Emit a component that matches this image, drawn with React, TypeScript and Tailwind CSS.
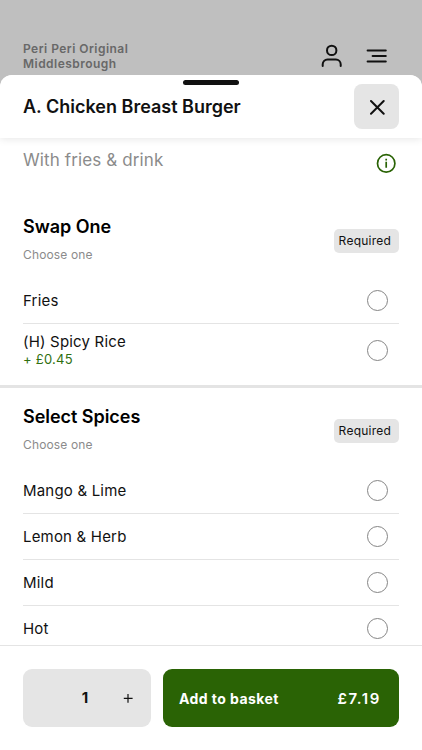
type Option = { name: string; price?: string };

const sections: { title: string; options: Option[] }[] = [
  {
    title: "Swap One",
    options: [{ name: "Fries" }, { name: "(H) Spicy Rice", price: "+ £0.45" }],
  },
  {
    title: "Select Spices",
    options: [
      { name: "Mango & Lime" },
      { name: "Lemon & Herb" },
      { name: "Mild" },
      { name: "Hot" },
    ],
  },
];

function OptionRow({ option, last }: { option: Option; last: boolean }) {
  return (
    <li
      className={`flex items-center justify-between pr-[11px] ${
        option.price ? "h-[53px]" : last ? "h-[45px]" : "h-[46px]"
      } ${last ? "" : "border-b border-[#e4e4e4]"}`}
    >
      <div>
        <p className="text-[15px] leading-[18px] tracking-[0.19px]">{option.name}</p>
        {option.price && (
          <p className="text-[13px] leading-[17px] tracking-[0.25px] text-[#2f6f10]">
            {option.price}
          </p>
        )}
      </div>
      <span className="size-[21px] rounded-full border border-[#858585]" />
    </li>
  );
}

export default function App() {
  return (
    <div className="flex h-[750px] w-[422px] flex-col overflow-hidden bg-[#bfbfbf] font-['Inter',sans-serif] text-[#111]">
      {/* ================= PAGE HEADER ================= */}
      <header className="flex h-[75px] shrink-0 justify-between pt-[41px] pr-[34px] pl-[23px]">
        <p className="text-[12px] leading-[15px] font-semibold tracking-[0.47px] text-[#686868]">
          Peri Peri Original
          <br />
          Middlesbrough
        </p>
        <div className="flex gap-[24px] pt-[3px]">
          <svg width="22" height="24" viewBox="0 0 22 24" fill="none" stroke="#111" strokeWidth="2" strokeLinecap="round">
            <circle cx="11.7" cy="6.4" r="4.7" />
            <path d="M2.7 22v-1.7a4.8 4.8 0 0 1 4.8-4.8h8.4a4.8 4.8 0 0 1 4.8 4.8v1.7" />
          </svg>
          <svg width="22" height="24" viewBox="0 0 22 24" fill="none" stroke="#111" strokeWidth="2" strokeLinecap="round">
            <path d="M1.6 6.5h18.2M6.6 12h13.2M1.6 17.6h18.2" />
          </svg>
        </div>
      </header>

      {/* ================= SHEET ================= */}
      <main className="flex min-h-0 flex-1 flex-col overflow-hidden rounded-t-[12px] bg-white">
        <div className="relative z-10 flex h-[63px] shrink-0 items-center justify-between bg-white pr-[23px] pl-[23px] shadow-[0_1px_8px_rgba(0,0,0,0.1)]">
          <span className="absolute top-[5px] left-[183px] h-[5px] w-[56px] rounded-full bg-[#111]" />
          <h1 className="text-[18px] font-semibold">A. Chicken Breast Burger</h1>
          <button
            aria-label="Close"
            className="flex size-[45px] items-center justify-center rounded-[8px] bg-[#e5e5e5]"
          >
            <svg width="16" height="16" viewBox="0 0 16 16" fill="none" stroke="#111" strokeWidth="2" strokeLinecap="round">
              <path d="M2 2l12.7 12.7M14.7 2L2 14.7" />
            </svg>
          </button>
        </div>

        <div className="min-h-0 flex-1 overflow-hidden">
          <div className="flex h-[60px] justify-between pt-[10px] pr-[26px] pl-[23px]">
            <p className="text-[17px] leading-[24px] tracking-[0.12px] text-[#8b8b8b]">
              With fries &amp; drink
            </p>
            <svg className="mt-[5px]" width="20" height="20" viewBox="0 0 20 20" fill="none" stroke="#2a6305">
              <circle cx="10.2" cy="10.4" r="8.7" strokeWidth="1.7" />
              <path d="M10.2 8.7v6M10.2 5.7v1.7" strokeWidth="1.7" />
            </svg>
          </div>

          {sections.map((section) => (
            <section
              key={section.title}
              className="border-b-[3px] border-[#e4e4e4] px-[23px] pb-[8px]"
            >
              <div className="flex h-[80px] items-start justify-between">
                <div>
                  <h2 className="mt-[17px] text-[18px] leading-[24px] font-semibold tracking-[-0.04px] text-black">
                    {section.title}
                  </h2>
                  <p className="mt-[8px] text-[12px] leading-[16px] tracking-[0.15px] text-[#8b8b8b]">
                    Choose one
                  </p>
                </div>
                <span className="mt-[31px] flex h-[24px] w-[65px] items-center rounded-[5px] bg-[#e5e5e5] pl-[4.6px] text-[12px] tracking-[0.25px]">
                  Required
                </span>
              </div>
              <ul>
                {section.options.map((option, i) => (
                  <OptionRow
                    key={option.name}
                    option={option}
                    last={i === section.options.length - 1}
                  />
                ))}
              </ul>
            </section>
          ))}
        </div>

        {/* ================= BASKET BAR ================= */}
        <footer className="flex h-[105px] shrink-0 gap-[12px] border-t border-[#e4e4e4] bg-white px-[23px] pt-[23px]">
          <div className="flex h-[58px] w-[128px] items-center rounded-[9px] bg-[#e5e5e5]">
            <span className="ml-[57px] w-[10px] text-center text-[15px] font-bold">1</span>
            <button aria-label="Increase quantity" className="ml-[33px]">
              <svg width="10" height="10" viewBox="0 0 10 10" stroke="#111" strokeWidth="1.2">
                <path d="M5 .9v8.8M.8 5.3h8.8" />
              </svg>
            </button>
          </div>
          <button className="flex h-[58px] flex-1 items-center justify-between rounded-[9px] bg-[#2a6305] pr-[18px] pl-[16px] text-[14px] font-bold text-white">
            <span className="tracking-[0.43px]">Add to basket</span>
            <span className="pt-[2px] text-[15px] font-semibold tracking-[1.6px]">£7.19</span>
          </button>
        </footer>
      </main>
    </div>
  );
}
